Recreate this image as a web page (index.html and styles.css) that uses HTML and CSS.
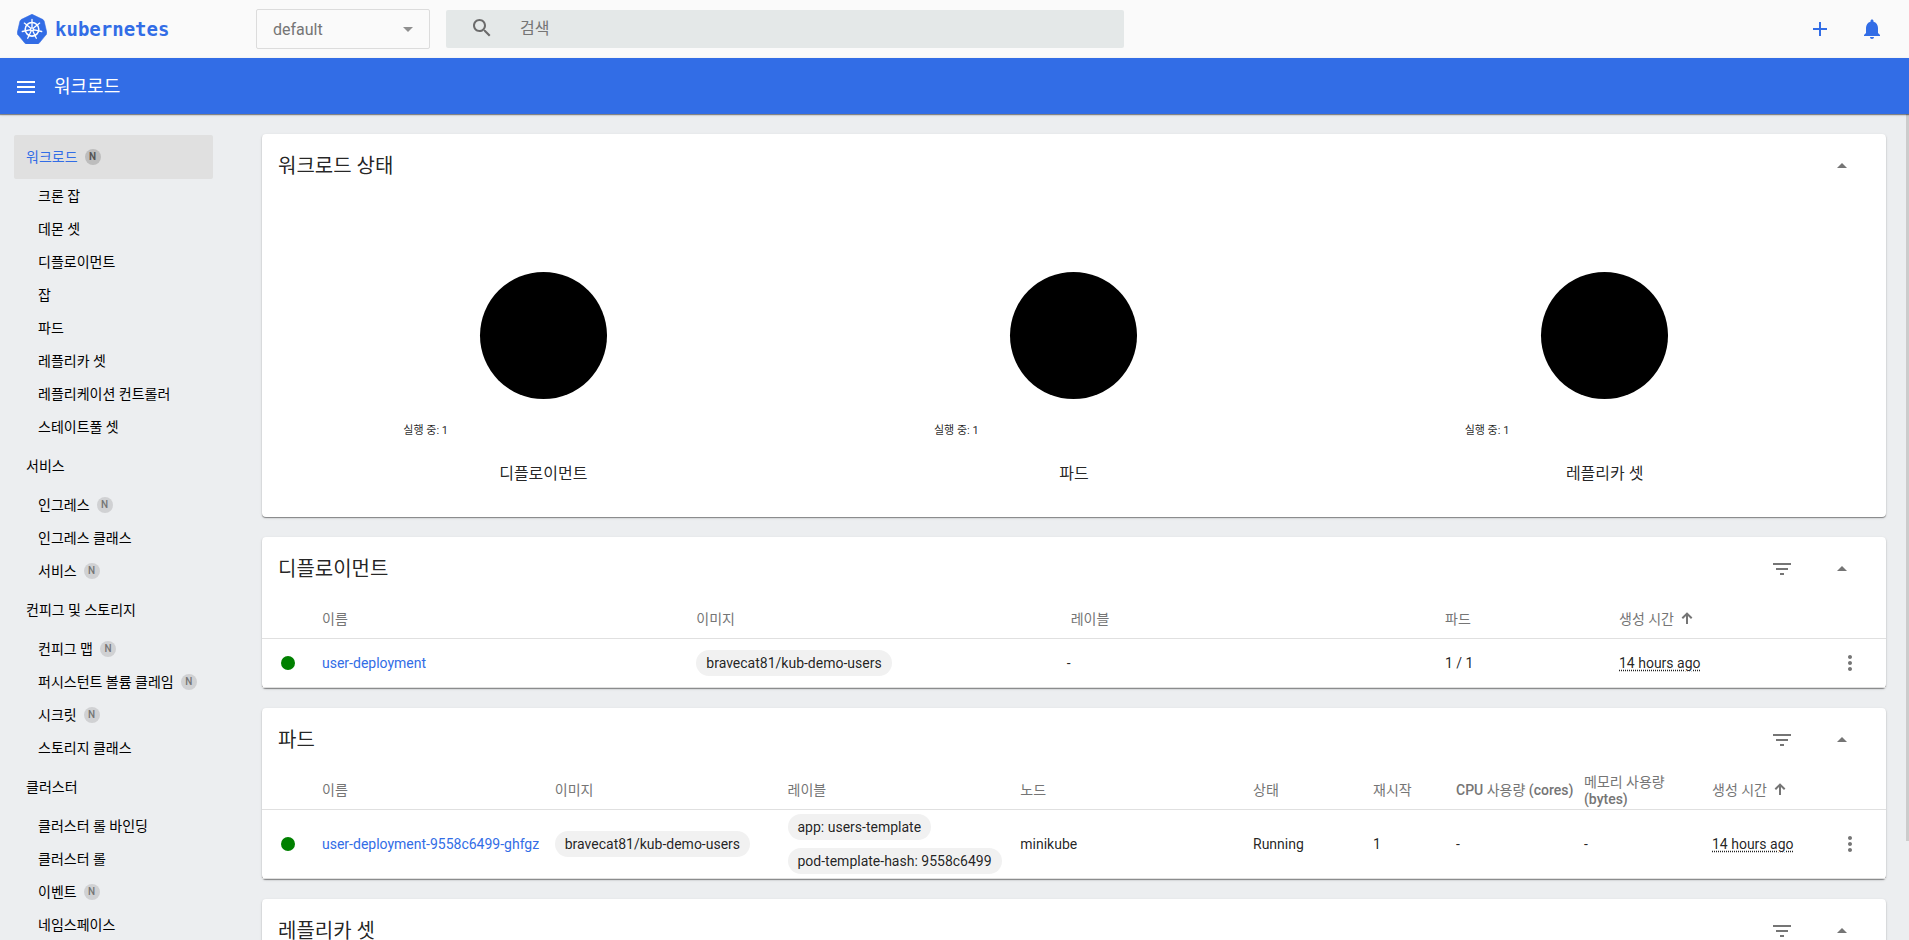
FILE: index.html
```html
<!DOCTYPE html>
<html lang="ko">
<head>
<meta charset="utf-8">
<title>Kubernetes Dashboard</title>
<link rel="stylesheet" href="styles.css">
</head>
<body>
<svg class="defs" aria-hidden="true">
  <symbol id="i-up" viewBox="0 0 24 24"><path d="M7 14l5-5 5 5z"/></symbol>
  <symbol id="i-filter" viewBox="0 0 24 24"><path d="M10 18h4v-2h-4v2zM3 6v2h18V6H3zm3 7h12v-2H6v2z"/></symbol>
  <symbol id="i-more" viewBox="0 0 24 24"><path d="M12 8c1.1 0 2-.9 2-2s-.9-2-2-2-2 .9-2 2 .9 2 2 2zm0 2c-1.1 0-2 .9-2 2s.9 2 2 2 2-.9 2-2-.9-2-2-2zm0 6c-1.1 0-2 .9-2 2s.9 2 2 2 2-.9 2-2-.9-2-2-2z"/></symbol>
  <symbol id="i-sort" viewBox="0 0 12 12"><path d="M5 12V4L2 7 .6 5.600 6 .2l5.400 5.400L10 7 7 4v8z"/></symbol>
</svg>

<header class="topbar">
  <a class="brand" href="#">
    <svg class="brand-mark" viewBox="0 0 30 30" aria-hidden="true">
      <path d="M15 .3l11 5.300 1.100 1.400 2.700 11.600-.4 1.700-7.600 9.300-1.500.5H9.700l-1.500-.6L.6 20.300l-.3-1.700L3 7l1.100-1.400z" fill="#326ce5" stroke="#326ce5" stroke-width=".6" stroke-linejoin="round"/>
      <g fill="none" stroke="#fff">
        <circle cx="15" cy="15.300" r="6.800" stroke-width="1.600"/>
        <path stroke-width="1.300" stroke-linecap="round" d="M15 15.300V5.400M15 15.300l7.700-6.200M15 15.300l9.700 2.200M15 15.300l4.300 8.900M15 15.300l-4.300 8.900M15 15.300l-9.700 2.200M15 15.300L7.300 9.100"/>
      </g>
      <circle cx="15" cy="15.300" r="1.900" fill="#fff"/><circle cx="15" cy="15.300" r=".8" fill="#326ce5"/>
    </svg>
    <span class="brand-name">kubernetes</span>
  </a>
  <div class="namespace">
    <select aria-label="네임스페이스"><option>default</option></select>
    <svg class="icon" viewBox="0 0 24 24" aria-hidden="true"><path d="M7 10l5 5 5-5z"/></svg>
  </div>
  <label class="search">
    <svg class="icon" viewBox="0 0 24 24" aria-hidden="true"><path d="M15.500 14h-.79l-.28-.27C15.410 12.590 16 11.110 16 9.500 16 5.910 13.090 3 9.500 3S3 5.910 3 9.500 5.910 16 9.500 16c1.610 0 3.090-.59 4.230-1.570l.27.28v.79l5 4.990L20.490 19l-4.990-5zm-6 0C7.010 14 5 11.990 5 9.500S7.010 5 9.500 5 14 7.010 14 9.500 11.990 14 9.500 14z"/></svg>
    <input type="text" placeholder="검색" aria-label="검색">
  </label>
  <div class="actions">
    <button aria-label="생성"><svg class="icon" viewBox="0 0 24 24"><path d="M19 13h-6v6h-2v-6H5v-2h6V5h2v6h6z"/></svg></button>
    <button aria-label="알림"><svg class="icon" viewBox="0 0 24 24"><path d="M12 22c1.100 0 2-.9 2-2h-4c0 1.100.89 2 2 2zm6-6v-5c0-3.070-1.640-5.640-4.500-6.320V4c0-.83-.67-1.500-1.500-1.500s-1.500.67-1.500 1.500v.68C7.630 5.360 6 7.920 6 11v5l-2 2v1h16v-1l-2-2z"/></svg></button>
  </div>
</header>

<div class="titlebar">
  <button aria-label="메뉴"><svg class="icon" viewBox="0 0 24 24"><path d="M3 18h18v-2H3v2zm0-5h18v-2H3v2zm0-7v2h18V6H3z"/></svg></button>
  <h1>워크로드</h1>
</div>

<div class="body">
  <nav class="sidebar">
    <a class="group active" href="#">워크로드<span class="badge">N</span></a>
    <a href="#">크론 잡</a>
    <a href="#">데몬 셋</a>
    <a href="#">디플로이먼트</a>
    <a href="#">잡</a>
    <a href="#">파드</a>
    <a href="#">레플리카 셋</a>
    <a href="#">레플리케이션 컨트롤러</a>
    <a href="#">스테이트풀 셋</a>
    <a class="group" href="#">서비스</a>
    <a href="#">인그레스<span class="badge">N</span></a>
    <a href="#">인그레스 클래스</a>
    <a href="#">서비스<span class="badge">N</span></a>
    <a class="group" href="#">컨피그 및 스토리지</a>
    <a href="#">컨피그 맵<span class="badge">N</span></a>
    <a href="#">퍼시스턴트 볼륨 클레임<span class="badge">N</span></a>
    <a href="#">시크릿<span class="badge">N</span></a>
    <a href="#">스토리지 클래스</a>
    <a class="group" href="#">클러스터</a>
    <a href="#">클러스터 롤 바인딩</a>
    <a href="#">클러스터 롤</a>
    <a href="#">이벤트<span class="badge">N</span></a>
    <a href="#">네임스페이스</a>
  </nav>

  <main class="content">
    <section class="card">
      <div class="card-head">
        <h2>워크로드 상태</h2>
        <button aria-label="접기"><svg class="icon"><use href="#i-up"/></svg></button>
      </div>
      <div class="charts">
        <figure><div class="pie"></div><div class="legend">실행 중: 1</div><figcaption>디플로이먼트</figcaption></figure>
        <figure><div class="pie"></div><div class="legend">실행 중: 1</div><figcaption>파드</figcaption></figure>
        <figure><div class="pie"></div><div class="legend">실행 중: 1</div><figcaption>레플리카 셋</figcaption></figure>
      </div>
    </section>

    <section class="card">
      <div class="card-head">
        <h2>디플로이먼트</h2>
        <button aria-label="필터"><svg class="icon"><use href="#i-filter"/></svg></button>
        <button aria-label="접기"><svg class="icon"><use href="#i-up"/></svg></button>
      </div>
      <table>
        <colgroup><col class="c-status"><col><col><col><col class="c-pods"><col class="c-created"><col class="c-menu"></colgroup>
        <thead><tr><th></th><th>이름</th><th>이미지</th><th>레이블</th><th>파드</th><th>생성 시간<svg class="sort"><use href="#i-sort"/></svg></th><th></th></tr></thead>
        <tbody><tr>
          <td class="status"><span class="dot"></span></td>
          <td><a href="#">user-deployment</a></td>
          <td><span class="chip">bravecat81/kub-demo-users</span></td>
          <td><div class="chips"><span class="none">-</span></div></td>
          <td>1 / 1</td>
          <td><span class="ago">14 hours ago</span></td>
          <td class="menu"><button aria-label="더 보기"><svg class="icon"><use href="#i-more"/></svg></button></td>
        </tr></tbody>
      </table>
    </section>

    <section class="card">
      <div class="card-head">
        <h2>파드</h2>
        <button aria-label="필터"><svg class="icon"><use href="#i-filter"/></svg></button>
        <button aria-label="접기"><svg class="icon"><use href="#i-up"/></svg></button>
      </div>
      <table>
        <colgroup><col class="c-status"><col><col><col><col><col class="c-state"><col class="c-restarts"><col class="c-usage"><col class="c-usage"><col class="c-age"><col class="c-action"></colgroup>
        <thead><tr><th></th><th>이름</th><th>이미지</th><th>레이블</th><th>노드</th><th>상태</th><th>재시작</th><th><span class="latin">CPU</span> 사용량 <span class="latin">(cores)</span></th><th>메모리 사용량 <span class="latin">(bytes)</span></th><th>생성 시간<svg class="sort"><use href="#i-sort"/></svg></th><th></th></tr></thead>
        <tbody><tr>
          <td class="status"><span class="dot"></span></td>
          <td><a href="#">user-deployment-9558c6499-ghfgz</a></td>
          <td><span class="chip">bravecat81/kub-demo-users</span></td>
          <td><div class="chip-stack"><span class="chip">app: users-template</span><span class="chip">pod-template-hash: 9558c6499</span></div></td>
          <td>minikube</td>
          <td>Running</td>
          <td>1</td>
          <td>-</td>
          <td>-</td>
          <td><span class="ago">14 hours ago</span></td>
          <td class="menu"><button aria-label="더 보기"><svg class="icon"><use href="#i-more"/></svg></button></td>
        </tr></tbody>
      </table>
    </section>

    <section class="card">
      <div class="card-head">
        <h2>레플리카 셋</h2>
        <button aria-label="필터"><svg class="icon"><use href="#i-filter"/></svg></button>
        <button aria-label="접기"><svg class="icon"><use href="#i-up"/></svg></button>
      </div>
    </section>
  </main>
  <div class="scroll-thumb"></div>
</div>
</body>
</html>
```
FILE: styles.css
```css
* { box-sizing: border-box; }

body {
  margin: 0;
  height: 100vh;
  display: flex;
  flex-direction: column;
  overflow: hidden;
  background: #eceef0;
  color: rgba(0, 0, 0, .87);
  font: 14px/20px Roboto, "Noto Sans CJK KR", sans-serif;
}

a { color: #326de6; text-decoration: none; }
h1, h2, figure { margin: 0; font-weight: 400; }
button { display: flex; align-items: center; justify-content: center; padding: 0; border: 0; background: none; color: inherit; }
.defs { display: none; }
.icon { width: 24px; height: 24px; fill: currentColor; flex: none; }

.topbar { height: 58px; flex: none; display: flex; align-items: center; padding: 0 18px 0 17px; background: #fafafa; }
.brand { display: flex; align-items: center; gap: 8px; width: 239px; }
.brand-mark { width: 30px; height: 30px; }
.brand-name { font: bold 19px/24px "DejaVu Sans Mono", monospace; color: #326de6; }

.namespace { position: relative; width: 174px; height: 40px; margin-right: 16px; }
.namespace select { width: 100%; height: 100%; padding: 0 16px; border: 1px solid #dcdcdc; border-radius: 2px; background: #fafafa; color: #757575; font: 16px Roboto, sans-serif; appearance: none; }
.namespace .icon { position: absolute; right: 10px; top: 8px; color: #8f8f8f; pointer-events: none; }

.search { display: flex; align-items: center; width: 678px; height: 38px; padding: 0 24px 2px; gap: 26px; border-radius: 2px; background: #e4e8e8; color: #6b6b6b; }
.search input { flex: 1; min-width: 0; padding: 0; border: 0; outline: 0; background: none; color: inherit; font: 16px Roboto, "Noto Sans CJK KR", sans-serif; }
.search input::placeholder { color: #757575; opacity: 1; }

.actions { display: flex; gap: 14px; margin-left: auto; color: #326de6; }
.actions button { width: 38px; height: 40px; }

.titlebar { position: relative; z-index: 1; height: 56px; flex: none; display: flex; align-items: center; gap: 16px; padding: 2px 14px 0; background: #326de6; color: #fff; box-shadow: 0 1px 1px rgba(0, 0, 0, .4), 0 1px 3px rgba(0, 0, 0, .12); }
.titlebar h1 { font-size: 18px; line-height: 24px; }

.body { position: relative; flex: 1; min-height: 0; display: flex; overflow: hidden; }

.sidebar { width: 242px; flex: none; padding: 20px 29px 0 14px; }
.sidebar a { display: flex; align-items: center; height: 33px; padding-left: 24px; color: #000; white-space: nowrap; }
.sidebar .group { height: 44px; margin-top: 1px; padding-left: 12px; border-radius: 2px; }
.sidebar .active { background: #e0e0e0; color: #326de6; }
.badge { width: 16px; height: 16px; margin-left: 7px; border-radius: 50%; background: #d0d1d3; color: #757575; font: 500 10px/16px Roboto, sans-serif; text-align: center; }
.active .badge { background: #bdbdbd; color: #555; font-weight: 700; }

.content { flex: 1; min-width: 0; display: flex; flex-direction: column; gap: 20px; padding: 20px 23px 20px 20px; }
.card { flex: none; border-radius: 4px; background: #fff; box-shadow: 0 1px 1px rgba(0, 0, 0, .4), 0 1px 3px rgba(0, 0, 0, .12); }
.card-head { display: flex; align-items: center; height: 64px; padding: 0 24px 0 16px; color: #757575; }
.card-head h2 { flex: 1; font-size: 20px; line-height: 28px; color: rgba(0, 0, 0, .87); }
.card-head button { width: 40px; height: 40px; }
.card-head button + button { margin-left: 20px; }

.charts { display: grid; grid-template-columns: repeat(3, 1fr); padding: 74px 16px 31px; }
.charts figure { display: flex; flex-direction: column; align-items: center; }
.pie { width: 127px; height: 127px; border-radius: 50%; background: #000; }
.legend { width: 280px; margin-top: 22px; font-size: 11px; line-height: 20px; }
figcaption { margin-top: 21px; font-size: 16px; line-height: 24px; }

table { width: 100%; table-layout: fixed; border-collapse: separate; border-spacing: 0; }
th, td { padding: 0; text-align: left; vertical-align: middle; white-space: nowrap; }
th { height: 38px; padding-right: 8px; border-bottom: 1px solid #e0e0e0; color: #757575; font-weight: 400; line-height: 17px; white-space: normal; }
td { height: 49px; border-bottom: 1px solid #e0e0e0; }
.latin { font-weight: 500; }
.c-status { width: 60px; }
.c-pods, .c-created { width: 174px; }
.c-menu { width: 93px; }
.c-state { width: 120px; }
.c-restarts { width: 83px; }
.c-usage { width: 128px; }
.c-age { width: 118px; }
.c-action { width: 56px; }
.status { padding-left: 19px; }
.dot { display: block; width: 14px; height: 14px; border-radius: 50%; background: #008000; }
.chip { display: inline-block; padding: 0 10px; border-radius: 13px; background: #f1f1f1; line-height: 26px; vertical-align: middle; }
.chips { margin-left: -4px; }
.chip-stack { display: flex; flex-direction: column; align-items: flex-start; gap: 8px; padding: 4px 0; }
.ago { text-decoration: underline dotted; text-underline-offset: 2px; }
.sort { width: 12px; height: 12px; margin-left: 7px; fill: #757575; }
.menu button { margin: 0 24px 0 auto; color: #757575; }

.scroll-thumb { position: absolute; top: 0; right: 0; width: 3px; height: 88%; background: #ccc; }
```
